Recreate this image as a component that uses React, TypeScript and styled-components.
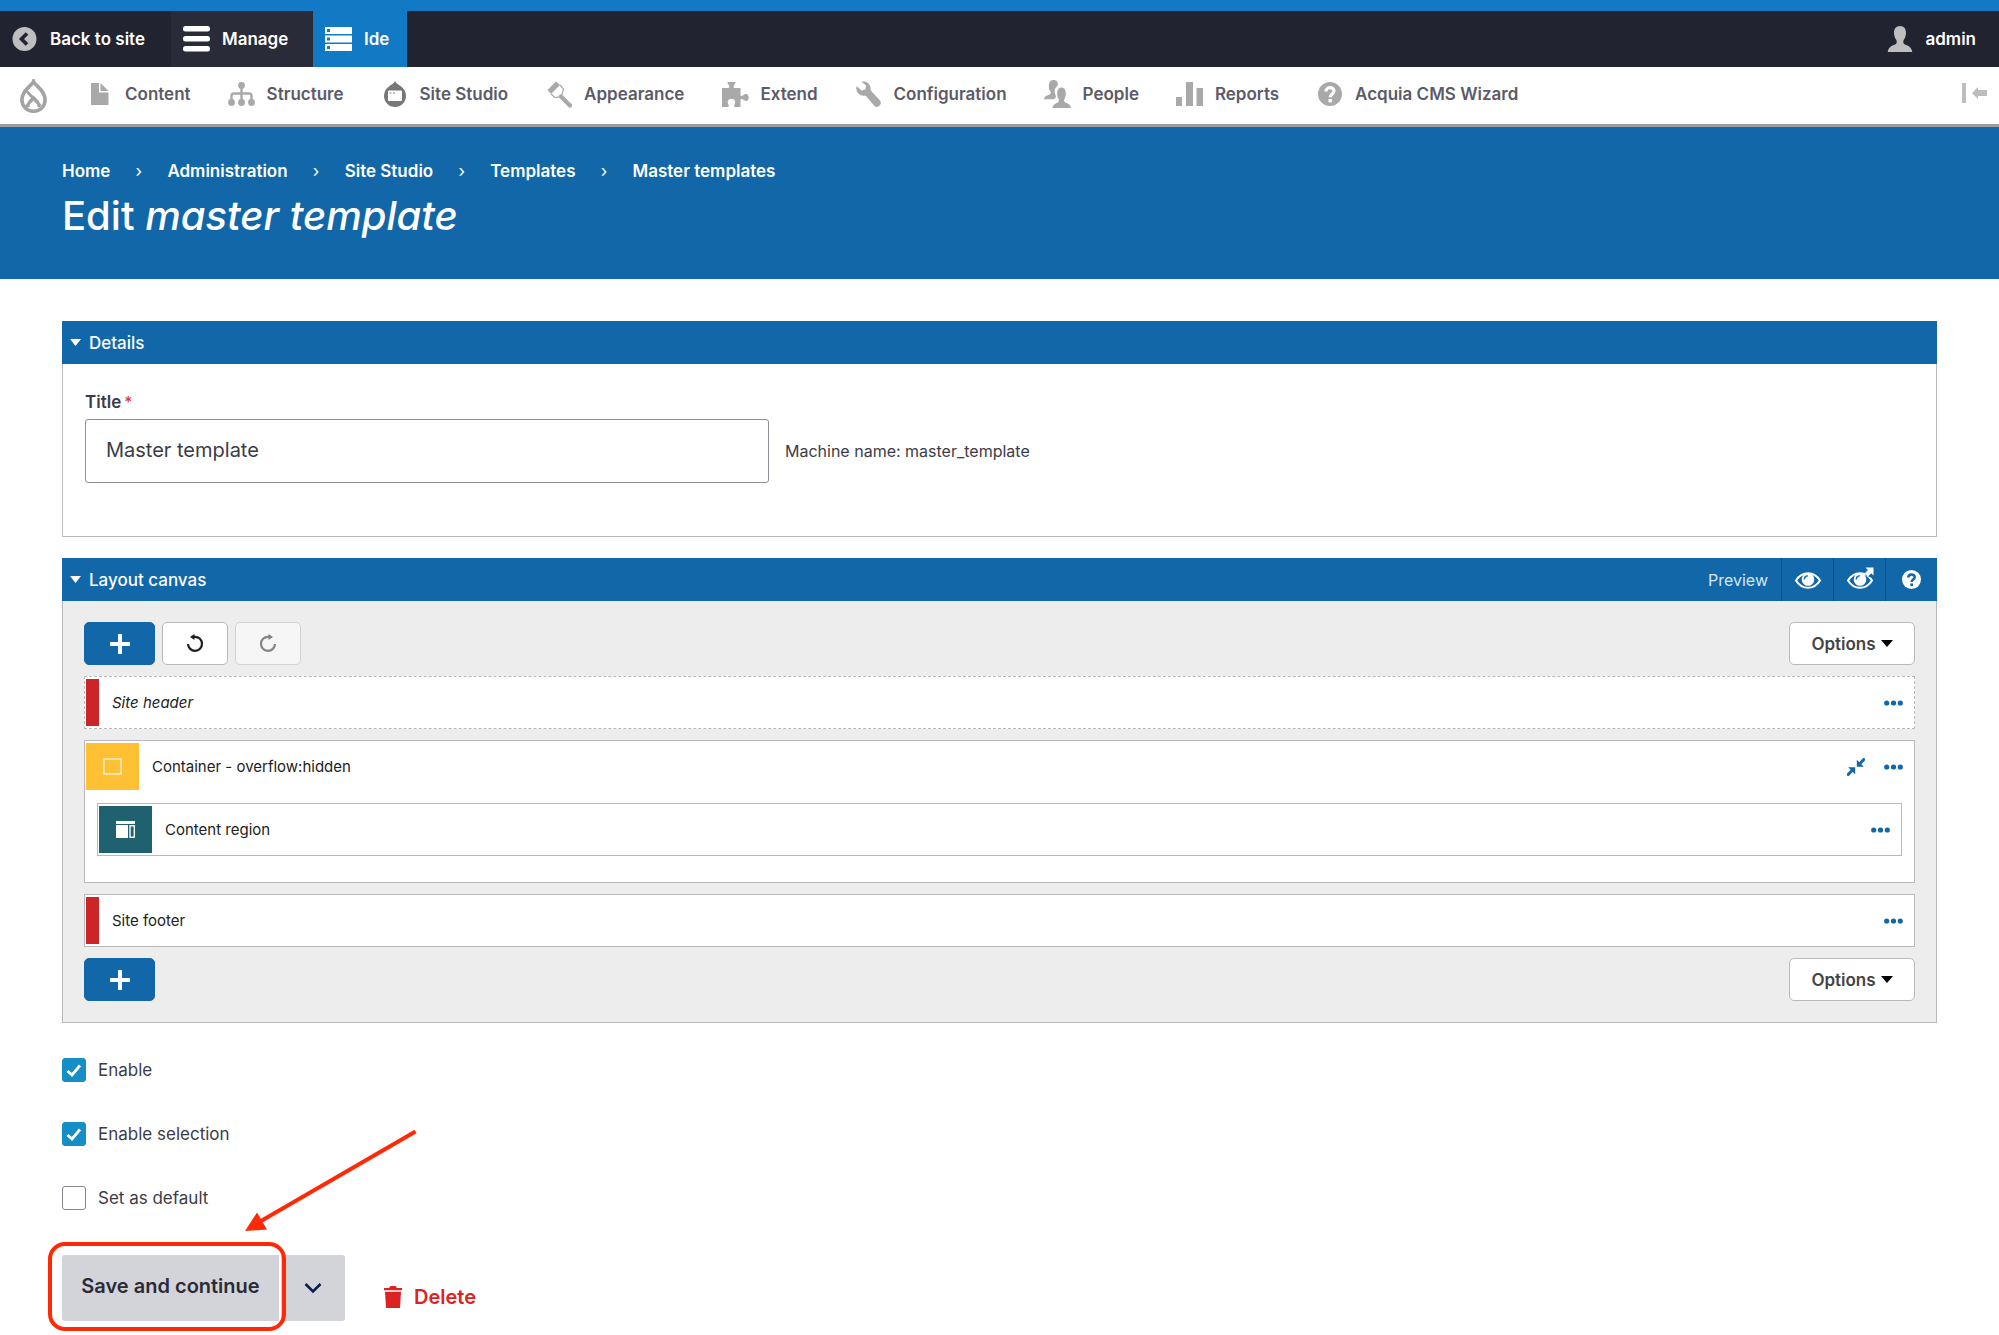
import React, { useState } from 'react';
import styled, { createGlobalStyle, css } from 'styled-components';

const blue = '#1167a8';
const red = '#cc2527';
const line = '#b9b9b9';

const GlobalStyle = createGlobalStyle`
  *, *::before, *::after { box-sizing: border-box; }
  body {
    margin: 0;
    background: #fff;
    color: #3b3c47;
    font-family: Inter, "Open Sans", "Liberation Sans", sans-serif;
    font-size: 17px;
    line-height: 24px;
  }
  button, input { font: inherit; color: inherit; }
  button { cursor: pointer; }
  a { color: inherit; text-decoration: none; }
  svg { display: block; flex: none; }
`;

/* ---------- Admin toolbar ---------- */

const TopBar = styled.nav`
  display: flex;
  height: 67px;
  border-top: 11px solid #127ac4;
  background: #222330;
  color: #fff;
`;

const TopTab = styled.a<{ $tone?: string; $end?: boolean; $width?: number }>`
  display: flex;
  align-items: center;
  gap: 12px;
  padding: 0 12px;
  ${p => p.$width && css`min-width: ${p.$width}px;`}
  background: ${p => p.$tone ?? 'transparent'};
  font-weight: 600;
  ${p => p.$end && css`
    margin-left: auto;
    padding-right: 23px;
  `}
`;

const Tray = styled.nav`
  display: flex;
  align-items: center;
  height: 60px;
  padding: 0 12px 0 20px;
  border-bottom: 3px solid #9a9ca0;
  color: #5b5b68;
  font-weight: 600;
`;

const TrayLogo = styled.a`
  margin-right: 2px;
`;

const TrayItem = styled.a`
  display: flex;
  align-items: center;
  gap: 11px;
  margin-left: 37px;
  padding-bottom: 3px;
`;

const TrayIcon = styled.span`
  display: grid;
  place-items: center;
  width: 28px;
  color: #a9a9a9;
`;

const TrayToggle = styled.button`
  margin-left: auto;
  padding: 0 0 6px;
  border: 0;
  background: none;
  color: #bdbdbd;
`;

/* ---------- Page header ---------- */

const PageHeader = styled.header`
  height: 152px;
  padding: 32px 62px 0;
  background: ${blue};
  color: #fff;
`;

const Crumbs = styled.ol`
  display: flex;
  margin: 0;
  padding: 0;
  list-style: none;
  font-weight: 600;
`;

const Crumb = styled.li`
  display: flex;
  align-items: center;
  & + &::before {
    content: "›";
    width: 57px;
    text-align: center;
    font-weight: 400;
  }
`;

const PageTitle = styled.h1`
  margin: 9px 0 0;
  font-size: 40px;
  line-height: 48px;
  font-weight: 500;
`;

/* ---------- Panels ---------- */

const Main = styled.main`
  padding: 42px 62px 12px;
`;

const Panel = styled.section`
  margin-bottom: 21px;
`;

const PanelHead = styled.div`
  display: flex;
  align-items: stretch;
  height: 43px;
  background: ${blue};
  color: #fff;
`;

const PanelToggle = styled.button`
  display: flex;
  align-items: center;
  gap: 8px;
  flex: 1;
  padding: 0 8px;
  border: 0;
  background: none;
  font-weight: 500;
`;

const PanelBody = styled.div<{ $canvas?: boolean }>`
  border: 1px solid ${line};
  border-top: 0;
  padding: ${p => (p.$canvas ? '21px 19px' : '26px 22px 53px')};
  background: ${p => (p.$canvas ? '#ededed' : '#fff')};
`;

const FieldLabel = styled.label`
  display: flex;
  gap: 3px;
  margin-bottom: 5px;
  font-weight: 600;
`;

const Required = styled.span`
  color: #e8383b;
  font-size: 15px;
`;

const FieldRow = styled.div`
  display: flex;
  align-items: center;
  gap: 16px;
  font-size: 16px;
`;

const TextInput = styled.input`
  width: 684px;
  height: 64px;
  padding: 0 20px 2px;
  border: 1px solid #8e8f98;
  border-radius: 3px;
  background: #fff;
  font-size: 20px;
`;

const PreviewLabel = styled.span`
  display: flex;
  align-items: center;
  padding-right: 13px;
  color: #d6e6f4;
  font-size: 16px;
`;

const HeadAction = styled.button`
  display: grid;
  place-items: center;
  width: 52px;
  padding: 0;
  border: 0;
  border-left: 1px solid #0b4f86;
  background: none;
`;

/* ---------- Layout canvas ---------- */

const CanvasBar = styled.div`
  display: flex;
  gap: 7px;
  padding: 0 2px;
`;

const CanvasButton = styled.button<{ $primary?: boolean; $end?: boolean }>`
  display: flex;
  align-items: center;
  justify-content: center;
  gap: 5px;
  height: 43px;
  min-width: ${p => (p.$primary ? 71 : 66)}px;
  padding: 0;
  border: 1px solid ${p => (p.$primary ? blue : '#b9b9b9')};
  border-radius: 5px;
  background: ${p => (p.$primary ? blue : '#fff')};
  color: ${p => (p.$primary ? '#fff' : '#1e1e1e')};
  ${p => p.$end && css`
    min-width: 126px;
    margin-left: auto;
    color: #444;
    font-weight: 600;
    & svg { color: #000; }
  `}
  &:disabled { opacity: 0.5; }
`;

const Blocks = styled.div`
  display: grid;
  gap: 11px;
  margin: 11px 2px;
`;

const Block = styled.div<{ $dashed?: boolean; $nested?: boolean }>`
  border: 1px ${p => (p.$dashed ? 'dashed' : 'solid')} ${line};
  background: #fff;
  font-style: ${p => (p.$dashed ? 'italic' : 'normal')};
  ${p => p.$nested && css`margin: 11px 12px 26px;`}
`;

const BlockRow = styled.div`
  display: flex;
  align-items: center;
  height: 51px;
  padding: 2px 11px 2px 1px;
  color: #222;
  font-size: 15px;
`;

const BlockTag = styled.span<{ $color: string; $narrow?: boolean }>`
  display: grid;
  place-items: center;
  align-self: stretch;
  width: ${p => (p.$narrow ? 13 : 53)}px;
  margin-right: 13px;
  background: ${p => p.$color};
`;

const BlockActions = styled.div`
  display: flex;
  align-items: center;
  gap: 19px;
  margin-left: auto;
`;

const IconButton = styled.button`
  padding: 0;
  border: 0;
  background: none;
  color: ${blue};
`;

/* ---------- Form options and actions ---------- */

const CheckList = styled.div`
  display: grid;
  gap: 40px;
  margin-top: 35px;
`;

const CheckRow = styled.label`
  display: flex;
  align-items: center;
  gap: 12px;
`;

const CheckBox = styled.span`
  display: grid;
  place-items: center;
  & > * { grid-area: 1 / 1; }
  & > svg { pointer-events: none; }
`;

const CheckInput = styled.input`
  appearance: none;
  width: 24px;
  height: 24px;
  margin: 0;
  border: 1px solid #85868f;
  border-radius: 3px;
  background: #fff;
  &:checked {
    border-color: #158dc5;
    background: #158dc5;
  }
`;

const Actions = styled.div`
  display: flex;
  align-items: center;
  gap: 39px;
  margin-top: 45px;
  font-size: 20px;
`;

const SplitButton = styled.div`
  position: relative;
  display: flex;
  gap: 2px;
`;

const SaveButton = styled.button`
  width: 217px;
  height: 66px;
  padding: 0 0 4px;
  border: 0;
  border-radius: 3px 0 0 3px;
  background: #d3d4d9;
  color: #2a2b36;
  font-weight: 600;
`;

const MoreButton = styled.button`
  display: grid;
  place-items: center;
  width: 64px;
  border: 0;
  border-radius: 0 3px 3px 0;
  background: #d3d4d9;
  color: #0c1f4f;
`;

const Highlight = styled.span`
  position: absolute;
  top: -13px;
  left: -14px;
  width: 238px;
  height: 89px;
  border: 4px solid #ff2a05;
  border-radius: 17px;
  pointer-events: none;
`;

const Pointer = styled.svg`
  position: absolute;
  left: 182px;
  top: -128px;
  pointer-events: none;
`;

const DeleteLink = styled.a`
  display: flex;
  align-items: center;
  gap: 12px;
  padding-top: 17px;
  color: #dc2323;
  font-weight: 600;
`;

/* ---------- Icons ---------- */

const BackIcon = () => (
  <svg width="26" height="26" viewBox="0 0 26 26">
    <circle cx="12.500" cy="13" r="12" fill="#bebebe" />
    <path d="M15 7.500 9.500 13l5.500 5.500" fill="none" stroke="#222330" strokeWidth="3.600" />
  </svg>
);
const MenuIcon = () => (
  <svg width="27" height="26" viewBox="0 0 27 26" fill="#fff">
    <rect y="0" width="27" height="5.500" rx="2.500" />
    <rect y="10" width="27" height="5.500" rx="2.500" />
    <rect y="20" width="27" height="5.500" rx="2.500" />
  </svg>
);
const IdeIcon = () => (
  <svg width="27" height="24" viewBox="0 0 27 24">
    <path d="M0 0h27v7H0zM0 8.500h27v7H0zM0 17h27v7H0z" fill="#fff" />
    <path d="M2 2h3v3H2zM2 10.500h3v3H2zM2 19h3v3H2z" fill="#127ac4" />
  </svg>
);
const UserIcon = () => (
  <svg width="26" height="26" viewBox="0 0 26 26" fill="#bebebe">
    <path d="M13 0c4 0 6.300 3 6 7.500-.2 3-1.200 5-2.300 6.500-.7 1.200-.6 3 .3 4 2.500 1.500 7.500 2 8.300 8H.7c.8-6 5.800-6.500 8.300-8 .9-1 1-2.800.3-4C8.200 12.500 7.200 10.500 7 7.500 6.700 3 9 0 13 0z" />
  </svg>
);
const DropIcon = () => (
  <svg width="27" height="34" viewBox="0 0 27 34" fill="none" stroke="#a3a3a3">
    <path d="M13.500 2.500c1.500 4.200 11.600 8.500 11.600 18.200 0 6.600-5.200 11.500-11.600 11.500S1.900 27.300 1.900 20.700c0-9.700 10.100-14 11.600-18.200z" strokeWidth="3.600" />
    <path d="M7 12.500l13.500 14.500M13.500 19.500 6 27.500M8.500 28c-1.500-5 2.500-6.500 5-9.500 2.500 3 6.500 4.500 5 9.500" strokeWidth="2.800" />
  </svg>
);
const FileIcon = () => (
  <svg width="18" height="22" viewBox="0 0 18 22" fill="currentColor">
    <path d="M0 0h8v9.500h9.500V22H0z" /><path d="M9.500 0 17.500 8h-8z" />
  </svg>
);
const TreeIcon = () => (
  <svg width="27" height="24" viewBox="0 0 27 24">
    <path d="M13.500 4v16M3.500 19v-5q0-2.500 2.500-2.500h15q2.500 0 2.500 2.500v5" fill="none" stroke="currentColor" strokeWidth="2.400" />
    <g fill="currentColor"><circle cx="13.500" cy="3.500" r="3.400" /><circle cx="3.500" cy="20.500" r="3.400" /><circle cx="13.500" cy="20.500" r="3.400" /><circle cx="23.500" cy="20.500" r="3.400" /></g>
  </svg>
);
const StudioIcon = () => (
  <svg width="24" height="27" viewBox="0 0 24 27">
    <path d="M12 0c1 2.500 3 3 5.500 5 3.500 2.500 5.500 5.500 5.500 10a11 11 0 0 1-22 0C1 10.500 3 7.500 6.500 5 9 3 11 2.500 12 0z" fill="#777" />
    <rect x="5" y="9.500" width="14" height="10.500" rx="1" fill="#fff" />
    <path d="M6.500 12h2M10 12h2" stroke="#aaa" strokeWidth="1.500" />
  </svg>
);
const BrushIcon = () => (
  <svg width="25" height="27" viewBox="0 0 25 27">
    <path d="M9 .500.500 9l3.500 4L13 4z" fill="currentColor" />
    <path d="M4 13l4 3.500 6.500-1 2-7.500L13 4" fill="none" stroke="currentColor" strokeWidth="1.200" />
    <path d="M14 15.500 23 24.500" stroke="currentColor" strokeWidth="4.200" strokeLinecap="round" />
  </svg>
);
const PuzzleIcon = () => (
  <svg width="27" height="25" viewBox="0 0 27 25" fill="currentColor">
    <path d="M0 6h7c1.500-2-1.500-3.500-1.500-6h8c0 2.500-3 4-1.500 6h6.500v7.500c2 1.500 3-1.500 5.500-1.500 3.600 0 3.600 7 0 7-2.500 0-3.500-3-5.500-1.500V25h-6c-1-1.500.7-3 .7-5 0-4.500-7.500-4.500-7.500 0 0 2 1.700 3.500.7 5H0z" />
  </svg>
);
const WrenchIcon = () => (
  <svg width="26" height="27" viewBox="0 0 26 27">
    <path d="M5.500.8C9.500-.5 14 2 14.500 6.500c0 1.200 0 2 .3 3L24 19.500c2.800 3.500-2 8.500-5.500 5.500L9.500 14.500C5 15.500.5 12.500.300 7.500L.500 5l5 4.500 4-1L10 4.500z" fill="currentColor" />
  </svg>
);
const PeopleIcon = () => (
  <svg width="27" height="28" viewBox="0 0 27 28" fill="currentColor">
    <path d="M9.500 0c3.500 0 5 2.500 4 6-2.800 1.500-3.500 5-2 9 .8 2 .5 3.500-2 4.300H0c.5-4 4-3.600 6-5 1-1 .8-2 .2-3C4 8.500 4 0 9.500 0z" />
    <path d="M17.500 7.500c5 0 5.200 7.500 3 11.500-.6 1-.6 2.500.4 3.200 2 1.200 5.600 1.600 6.100 5.800H8.500c.5-4.200 4-4.600 5.600-5.800 1-.7 1-2.200.4-3.200-2.200-4-2-11.500 3-11.500z" />
  </svg>
);
const ChartIcon = () => (
  <svg width="27" height="24" viewBox="0 0 27 24" fill="currentColor">
    <path d="M0 15h6v9H0zM10 0h7v24h-7zM20.500 6H27v18h-6.500z" />
  </svg>
);
const HelpIcon = ({ size, mark }: { size: number; mark: string }) => (
  <svg width={size} height={size} viewBox="0 0 24 24">
    <circle cx="12" cy="12" r="12" fill="currentColor" />
    <path d="M8 9.500C8 4.500 16 4.500 16 9c0 3-3.800 3-3.800 6.200" fill="none" stroke={mark} strokeWidth="3.200" />
    <rect x="10.500" y="17" width="3.400" height="3.400" fill={mark} />
  </svg>
);
const CollapseTrayIcon = () => (
  <svg width="25" height="20" viewBox="0 0 25 20" fill="currentColor">
    <path d="M0 0h4v20H0zM10 10l6-6v3h9v6h-9v3z" />
  </svg>
);
const Caret = ({ width }: { width: number }) => (
  <svg width={width} height="7" viewBox="0 0 12 7" preserveAspectRatio="none"><path d="M0 0h12L6 7z" fill="currentColor" /></svg>
);
const EyeIcon = ({ external }: { external?: boolean }) => (
  <svg width="28" height="26" viewBox="0 0 28 26">
    <path d="M2 13.500C8 3.800 20 3.800 26 13.500 20 23.200 8 23.200 2 13.500z" fill="none" stroke="#fff" strokeWidth="2" />
    <circle cx="14" cy="12.500" r="6.300" fill="#fff" />
    <path d="M10.300 12.500c0-2 1.500-3.600 3.500-3.800" fill="none" stroke={blue} strokeWidth="1.400" />
    {external && (
      <>
        <path d="M17 0h11v9.500l-3 1-5-2z" fill={blue} />
        <path d="M19.500.500H27.500v8l-2.300-2.300-3.200 3.200-3.200-3.200L22 3z" fill="#fff" />
      </>
    )}
  </svg>
);
const PlusIcon = () => (
  <svg width="20" height="20" viewBox="0 0 20 20"><path d="M10 0v20M0 10h20" stroke="#fff" strokeWidth="4" /></svg>
);
const UndoIcon = ({ flip }: { flip?: boolean }) => (
  <svg width="18" height="20" viewBox="0 0 18 20">
    <g transform={flip ? 'translate(18 0) scale(-1 1)' : undefined}>
      <path d="M2 10a7 7 0 1 0 7-7.200H6" fill="none" stroke="currentColor" strokeWidth="2.200" />
      <path d="M4 3 8.500 0v6z" fill="currentColor" />
    </g>
  </svg>
);
const DotsIcon = () => (
  <svg width="19" height="6" viewBox="0 0 19 6" fill="currentColor">
    <circle cx="2.700" cy="3" r="2.600" /><circle cx="9.500" cy="3" r="2.600" /><circle cx="16.300" cy="3" r="2.600" />
  </svg>
);
const CompressIcon = () => (
  <svg width="18" height="18" viewBox="0 0 18 18">
    <path d="M9.800 1.800v7h7zM8.200 16.200v-7h-7z" fill="currentColor" />
    <path d="M12 6.500 16.800 1.500M6 11.500 1.200 16.500" stroke="currentColor" strokeWidth="3" strokeLinecap="round" />
  </svg>
);
const ContainerIcon = () => (
  <svg width="19" height="17" viewBox="0 0 19 17"><rect x="1" y="1" width="17" height="15" fill="none" stroke="#fff1cc" strokeWidth="1.500" /></svg>
);
const RegionIcon = () => (
  <svg width="19" height="17" viewBox="0 0 19 17">
    <path d="M0 0h19v3H0zM0 4h12v13H0z" fill="#fff" />
    <rect x="14" y="4.800" width="4.300" height="11.400" fill="none" stroke="#fff" strokeWidth="1.400" />
  </svg>
);
const CheckIcon = () => (
  <svg width="16" height="13" viewBox="0 0 16 13"><path d="M1.500 7 6 11l8-9.500" fill="none" stroke="#fff" strokeWidth="2.800" /></svg>
);
const ChevronIcon = () => (
  <svg width="18" height="12" viewBox="0 0 18 12"><path d="M1.500 2 9 9.500 16.500 2" fill="none" stroke="currentColor" strokeWidth="2.600" /></svg>
);
const TrashIcon = () => (
  <svg width="18" height="22" viewBox="0 0 18 22" fill="currentColor">
    <path d="M0 2h5l1.500-2h5L13 2h5v2.200H0zM1 5.800h16L16 22H2z" />
  </svg>
);

/* ---------- Page ---------- */

const trayItems = [
  { label: 'Content', icon: <FileIcon /> },
  { label: 'Structure', icon: <TreeIcon /> },
  { label: 'Site Studio', icon: <StudioIcon /> },
  { label: 'Appearance', icon: <BrushIcon /> },
  { label: 'Extend', icon: <PuzzleIcon /> },
  { label: 'Configuration', icon: <WrenchIcon /> },
  { label: 'People', icon: <PeopleIcon /> },
  { label: 'Reports', icon: <ChartIcon /> },
  { label: 'Acquia CMS Wizard', icon: <HelpIcon size={24} mark="#fff" /> },
];

const crumbs = ['Home', 'Administration', 'Site Studio', 'Templates', 'Master templates'];

const options = [
  { id: 'enable', label: 'Enable', initial: true },
  { id: 'enable-selection', label: 'Enable selection', initial: true },
  { id: 'default', label: 'Set as default', initial: false },
];

const OptionsButton = () => (
  <CanvasButton $end type="button">Options<Caret width={12} /></CanvasButton>
);

const AddButton = () => (
  <CanvasButton $primary type="button" aria-label="Add"><PlusIcon /></CanvasButton>
);

const MoreActions = () => (
  <IconButton type="button" aria-label="More actions"><DotsIcon /></IconButton>
);

const Option = ({ id, label, initial }: { id: string; label: string; initial: boolean }) => {
  const [checked, setChecked] = useState(initial);
  return (
    <CheckRow htmlFor={id}>
      <CheckBox>
        <CheckInput id={id} type="checkbox" checked={checked} onChange={e => setChecked(e.target.checked)} />
        {checked && <CheckIcon />}
      </CheckBox>
      {label}
    </CheckRow>
  );
};

export default function App() {
  const [title, setTitle] = useState('Master template');
  return (
    <>
      <GlobalStyle />
      <TopBar>
        <TopTab href="#" $width={171}><BackIcon />Back to site</TopTab>
        <TopTab href="#" $tone="#2a2b38" $width={142}><MenuIcon />Manage</TopTab>
        <TopTab href="#" $tone="#127ac4" $width={94}><IdeIcon />Ide</TopTab>
        <TopTab href="#" $end><UserIcon />admin</TopTab>
      </TopBar>
      <Tray>
        <TrayLogo href="#" aria-label="Drupal"><DropIcon /></TrayLogo>
        {trayItems.map(item => (
          <TrayItem href="#" key={item.label}>
            <TrayIcon>{item.icon}</TrayIcon>
            {item.label}
          </TrayItem>
        ))}
        <TrayToggle type="button" aria-label="Vertical orientation"><CollapseTrayIcon /></TrayToggle>
      </Tray>

      <PageHeader>
        <Crumbs>
          {crumbs.map(name => (
            <Crumb key={name}><a href="#">{name}</a></Crumb>
          ))}
        </Crumbs>
        <PageTitle>Edit <em>master template</em></PageTitle>
      </PageHeader>

      <Main>
        <Panel>
          <PanelHead>
            <PanelToggle type="button"><Caret width={11} />Details</PanelToggle>
          </PanelHead>
          <PanelBody>
            <FieldLabel htmlFor="title">Title<Required>*</Required></FieldLabel>
            <FieldRow>
              <TextInput id="title" type="text" value={title} onChange={e => setTitle(e.target.value)} />
              <span>Machine name: master_template</span>
            </FieldRow>
          </PanelBody>
        </Panel>

        <Panel>
          <PanelHead>
            <PanelToggle type="button"><Caret width={11} />Layout canvas</PanelToggle>
            <PreviewLabel>Preview</PreviewLabel>
            <HeadAction type="button" aria-label="Preview"><EyeIcon /></HeadAction>
            <HeadAction type="button" aria-label="Preview in new window"><EyeIcon external /></HeadAction>
            <HeadAction type="button" aria-label="Help"><HelpIcon size={19} mark={blue} /></HeadAction>
          </PanelHead>
          <PanelBody $canvas>
            <CanvasBar>
              <AddButton />
              <CanvasButton type="button" aria-label="Undo"><UndoIcon /></CanvasButton>
              <CanvasButton type="button" aria-label="Redo" disabled><UndoIcon flip /></CanvasButton>
              <OptionsButton />
            </CanvasBar>
            <Blocks>
              <Block $dashed>
                <BlockRow>
                  <BlockTag $color={red} $narrow />
                  Site header
                  <BlockActions><MoreActions /></BlockActions>
                </BlockRow>
              </Block>
              <Block>
                <BlockRow>
                  <BlockTag $color="#ffc033"><ContainerIcon /></BlockTag>
                  Container - overflow:hidden
                  <BlockActions>
                    <IconButton type="button" aria-label="Collapse"><CompressIcon /></IconButton>
                    <MoreActions />
                  </BlockActions>
                </BlockRow>
                <Block $nested>
                  <BlockRow>
                    <BlockTag $color="#20616f"><RegionIcon /></BlockTag>
                    Content region
                    <BlockActions><MoreActions /></BlockActions>
                  </BlockRow>
                </Block>
              </Block>
              <Block>
                <BlockRow>
                  <BlockTag $color={red} $narrow />
                  Site footer
                  <BlockActions><MoreActions /></BlockActions>
                </BlockRow>
              </Block>
            </Blocks>
            <CanvasBar>
              <AddButton />
              <OptionsButton />
            </CanvasBar>
          </PanelBody>
        </Panel>

        <CheckList>
          {options.map(option => <Option key={option.id} {...option} />)}
        </CheckList>

        <Actions>
          <SplitButton>
            <SaveButton type="button">Save and continue</SaveButton>
            <MoreButton type="button" aria-label="More save options"><ChevronIcon /></MoreButton>
            <Highlight />
            <Pointer width="176" height="108" viewBox="0 0 176 108">
              <path d="M171.500 4.500 17 94" stroke="#ff2a05" strokeWidth="4" />
              <path d="M1 104 13 85.500 23 102.500z" fill="#ff2a05" />
            </Pointer>
          </SplitButton>
          <DeleteLink href="#"><TrashIcon />Delete</DeleteLink>
        </Actions>
      </Main>
    </>
  );
}
